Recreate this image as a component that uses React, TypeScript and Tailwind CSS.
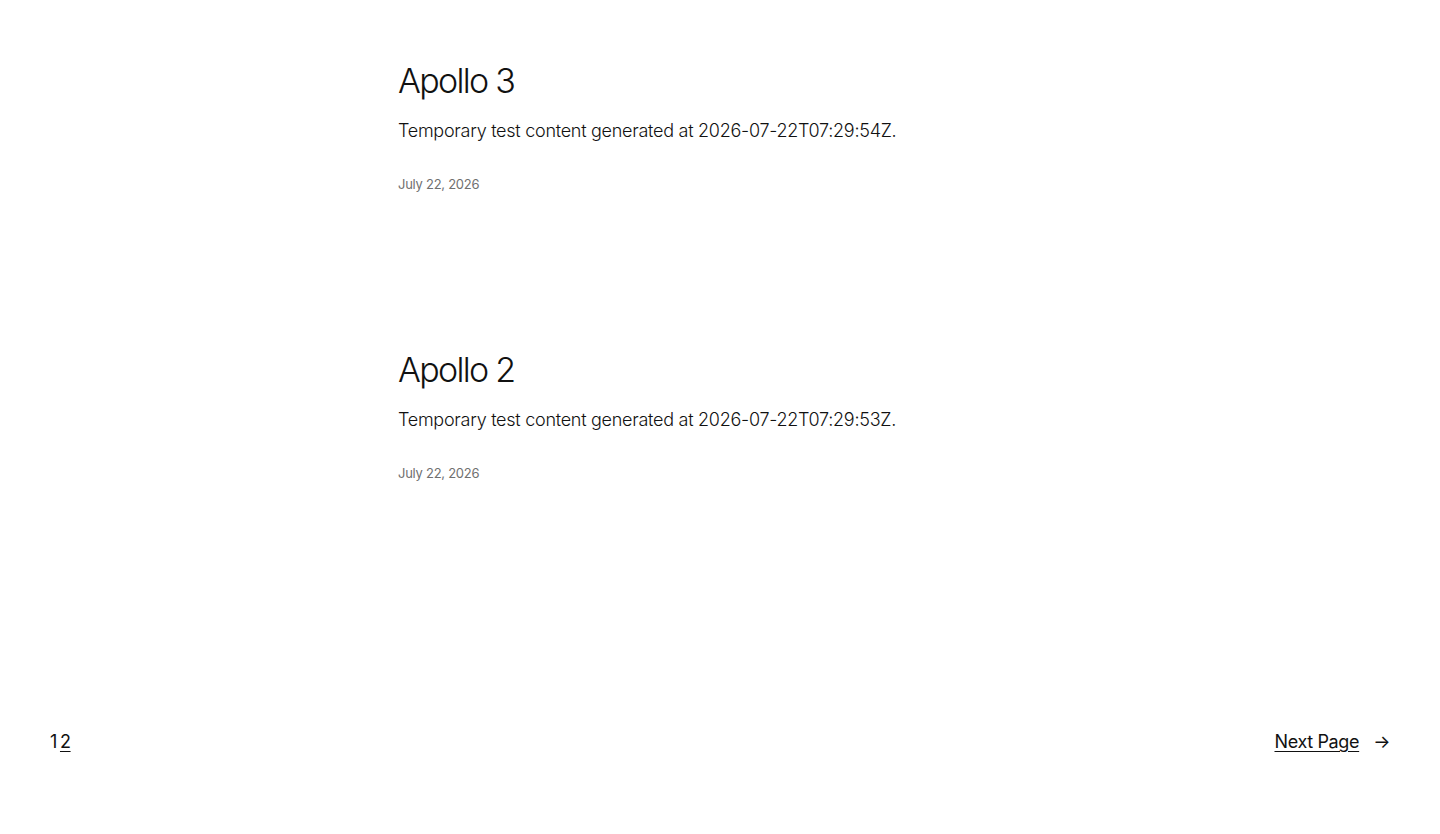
const posts = [
  {
    title: "Apollo 3",
    body: "Temporary test content generated at 2026-07-22T07:29:54Z.",
    date: "July 22, 2026",
  },
  {
    title: "Apollo 2",
    body: "Temporary test content generated at 2026-07-22T07:29:53Z.",
    date: "July 22, 2026",
  },
];

function PostItem({ title, body, date }: { title: string; body: string; date: string }) {
  return (
    <article className="flex flex-col">
      <h2 className="text-[34px] font-light leading-[43px] tracking-[-0.05em] text-[#111111]">
        <a href="#">{title}</a>
      </h2>
      <p className="mt-[15px] text-[18px] font-light leading-[28px] tracking-[-0.015em] text-[#111111]">{body}</p>
      <time className="mt-[29px] text-[13px] leading-[20px] tracking-[-0.02em] text-[#707070]">{date}</time>
    </article>
  );
}

export default function App() {
  return (
    <div
      className="flex min-h-[834px] flex-col bg-white text-[#111111]"
      style={{ fontFamily: "Inter, 'Noto Sans', sans-serif" }}
    >
      <main className="mx-auto flex w-[644px] flex-col gap-[154px] pt-[59px]">
        {posts.map((post) => (
          <PostItem key={post.title} {...post} />
        ))}
      </main>
      <nav className="mt-auto flex items-center justify-between px-[50px] pb-[80px] text-[18px] leading-[24px] tracking-[-0.02em]">
        <div className="flex gap-[3px]">
          <span>1</span>
          <a href="#" className="underline underline-offset-[3px]">
            2
          </a>
        </div>
        <a href="#" className="flex items-center gap-[14px]">
          <span className="underline underline-offset-[3px]">Next Page</span>
          <span>→</span>
        </a>
      </nav>
    </div>
  );
}
